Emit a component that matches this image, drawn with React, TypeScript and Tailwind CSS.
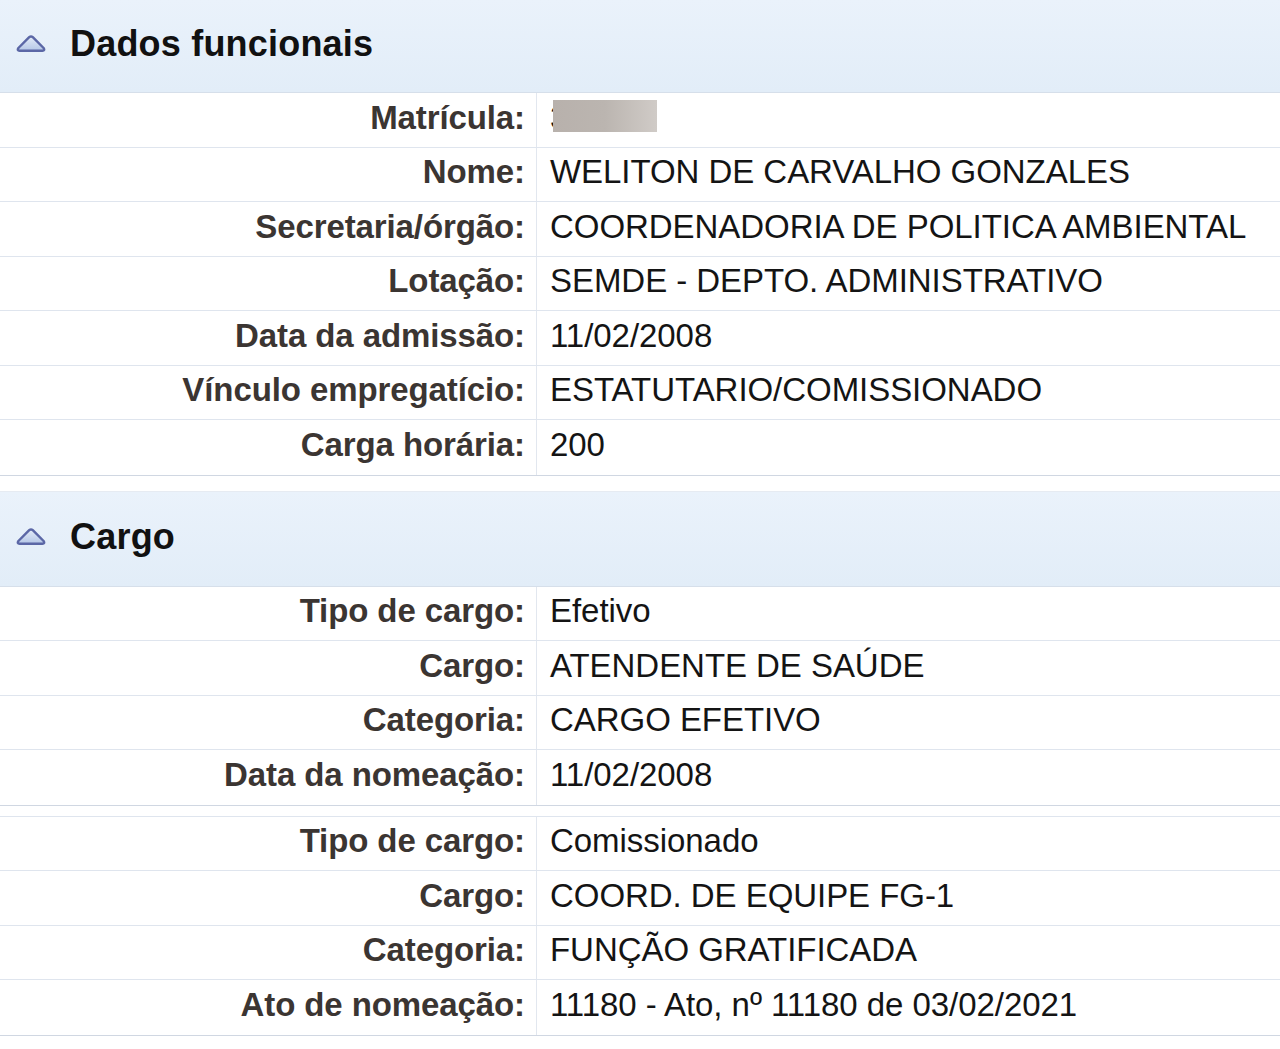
const dadosFuncionais: [string, string][] = [
  ["Matrícula:", "3"],
  ["Nome:", "WELITON DE CARVALHO GONZALES"],
  ["Secretaria/órgão:", "COORDENADORIA DE POLITICA AMBIENTAL"],
  ["Lotação:", "SEMDE - DEPTO. ADMINISTRATIVO"],
  ["Data da admissão:", "11/02/2008"],
  ["Vínculo empregatício:", "ESTATUTARIO/COMISSIONADO"],
  ["Carga horária:", "200"],
];

const cargos: [string, string][][] = [
  [
    ["Tipo de cargo:", "Efetivo"],
    ["Cargo:", "ATENDENTE DE SAÚDE"],
    ["Categoria:", "CARGO EFETIVO"],
    ["Data da nomeação:", "11/02/2008"],
  ],
  [
    ["Tipo de cargo:", "Comissionado"],
    ["Cargo:", "COORD. DE EQUIPE FG-1"],
    ["Categoria:", "FUNÇÃO GRATIFICADA"],
    ["Ato de nomeação:", "11180 - Ato, nº 11180 de 03/02/2021"],
  ],
];

function CollapseIcon() {
  return (
    <svg width="32" height="20" viewBox="0 0 32 20" className="shrink-0">
      <defs>
        <linearGradient id="tri" x1="0" y1="0" x2="0" y2="1">
          <stop offset="0" stopColor="#e4ecf8" />
          <stop offset="1" stopColor="#b4c6e6" />
        </linearGradient>
      </defs>
      <path
        d="M14.2 3.2 Q16 1.6 17.8 3.2 L28.6 14 Q30.2 16.6 27.4 16.8 L4.6 16.8 Q1.8 16.6 3.4 14 Z"
        fill="url(#tri)"
        stroke="#5b67a6"
        strokeWidth="2.4"
        strokeLinejoin="round"
      />
    </svg>
  );
}

function SectionHeader({ title, className }: { title: string; className?: string }) {
  return (
    <div
      className={`flex items-center gap-[23px] border-b border-[#d6dfea] bg-gradient-to-b from-[#eaf2fb] to-[#e2edf8] pb-[4px] pl-[15px] ${className ?? ""}`}
    >
      <CollapseIcon />
      <h2 className="text-[36px] font-bold leading-none tracking-[0.2px] text-[#111]">{title}</h2>
    </div>
  );
}

function Row({ label, value, last, redacted }: { label: string; value: string; last?: boolean; redacted?: boolean }) {
  return (
    <div className={`flex h-[54.5px] ${last ? "" : "border-b border-[#dfe5ee]"}`}>
      <div className="flex w-[537px] shrink-0 items-center justify-end border-r border-[#e2e7ef] pb-[5px] pr-[11px] text-[33px] font-bold tracking-[-0.1px] text-[#3b3532]">
        {label}
      </div>
      <div className="relative flex flex-1 items-center pb-[5px] pl-[13px] text-[33px] tracking-[-0.05px] text-[#141414]">
        {value}
        {redacted && (
          <span className="absolute left-[16px] top-[7px] h-[32px] w-[104px] bg-gradient-to-r from-[#b8b1ac] via-[#bbb5b0] to-[#d0cbc7]" />
        )}
      </div>
    </div>
  );
}

export default function App() {
  return (
    <div className="min-h-[1049px] w-[1280px] bg-white font-['Liberation_Sans',Arial,sans-serif]">
      <SectionHeader title="Dados funcionais" className="h-[93px]" />
      <div className="border-b border-[#d0d7e2]">
        {dadosFuncionais.map(([label, value], i) => (
          <Row
            key={label}
            label={label}
            value={value}
            redacted={i === 0}
            last={i === dadosFuncionais.length - 1}
          />
        ))}
      </div>

      <div className="mt-[15px] border-t border-[#e6ebf2]">
        <SectionHeader title="Cargo" className="h-[95px]" />
      </div>
      {cargos.map((group, gi) => (
        <div
          key={gi}
          className={`border-b border-[#d0d7e2] ${gi > 0 ? "mt-[10px] border-t border-t-[#dfe5ee]" : ""}`}
        >
          {group.map(([label, value], i) => (
            <Row key={label} label={label} value={value} last={i === group.length - 1} />
          ))}
        </div>
      ))}
    </div>
  );
}
